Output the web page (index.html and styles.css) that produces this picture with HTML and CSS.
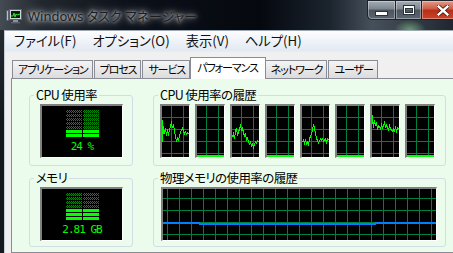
FILE: index.html
```html
<!DOCTYPE html>
<html lang="ja">
<head>
<meta charset="utf-8">
<title>Windows タスク マネージャー</title>
<link rel="stylesheet" href="styles.css">
</head>
<body>
<div class="window">
  <header class="titlebar">
    <svg class="app-icon" width="16" height="16" viewBox="0 0 16 16">
      <rect x="0.5" y="2.5" width="2" height="10" fill="#b8c0c8" stroke="#59616a"/>
      <rect x="3.5" y="1.5" width="12" height="10" fill="#d0d6dc" stroke="#59616a"/>
      <rect x="5" y="3" width="9" height="7" fill="#0b1f0e"/>
      <polyline points="5,8 7,8 8,5 9,9 10,6 11,7 14,6" fill="none" stroke="#30e030" stroke-width="1"/>
      <rect x="7" y="12" width="5" height="2" fill="#8a939c"/>
      <rect x="5" y="14" width="9" height="1.5" fill="#59616a"/>
    </svg>
    <span class="title">Windows タスク マネージャー</span>
    <div class="caption">
      <div class="cbtn min"><span class="glyph-min"></span></div>
      <div class="cbtn max"><span class="glyph-max"></span></div>
      <div class="cbtn close">
        <svg width="12" height="11" viewBox="0 0 12 11"><path d="M1.5 1.5 L10.5 9.5 M10.5 1.5 L1.5 9.5" stroke="#3a1008" stroke-width="4" stroke-linecap="square"/><path d="M1.5 1.5 L10.5 9.5 M10.5 1.5 L1.5 9.5" stroke="#fff" stroke-width="2.4" stroke-linecap="square"/></svg>
      </div>
    </div>
  </header>
  <div class="client">
    <nav class="menubar">
      <span class="menu">ファイル(F)</span>
      <span class="menu">オプション(O)</span>
      <span class="menu">表示(V)</span>
      <span class="menu">ヘルプ(H)</span>
    </nav>
    <div class="tabs">
      <div class="tabstrip">
        <span class="tab">アプリケーション</span>
        <span class="tab">プロセス</span>
        <span class="tab">サービス</span>
        <span class="tab selected">パフォーマンス</span>
        <span class="tab">ネットワーク</span>
        <span class="tab">ユーザー</span>
      </div>
      <div class="panel">
        <fieldset class="group">
          <legend>CPU 使用率</legend>
          <div class="display">
            <div class="meter">
              <div class="col"><div class="dim cpu-dim"></div><div class="lit cpu-lit"></div></div>
              <div class="col"><div class="dim cpu-dim"></div><div class="lit cpu-lit"></div></div>
            </div>
            <div class="readout">24 %</div>
          </div>
        </fieldset>
        <fieldset class="group">
          <legend>CPU 使用率の履歴</legend>
          <div class="graphs">
            <div class="graph">
              <svg width="27" height="51" viewBox="0 0 27 51"><polyline points="0.5,14 0.5,36 1.5,20 2.5,28 3.5,22 4.5,30 5.5,25 6.5,28 7.5,24 8.5,20 9.5,17 10.5,22 11.5,18 12.5,26 13.5,30 14.5,36 15.5,32 16.5,34 17.5,30 18.5,26 19.5,24 20.5,22 21.5,25 22.5,28 23.5,26 24.5,28 25.5,27 27,28"/></svg>
            </div>
            <div class="graph">
              <svg width="27" height="51" viewBox="0 0 27 51"><line class="base" x1="0" y1="50" x2="27" y2="50"/></svg>
            </div>
            <div class="graph">
              <svg width="27" height="51" viewBox="0 0 27 51"><polyline points="0.5,31 1.5,28 2.5,33 3.5,25 4.5,22 5.5,30 6.5,26 7.5,23 8.5,20 9.5,24 10.5,22 11.5,27 12.5,30 13.5,28 14.5,34 15.5,32 16.5,36 17.5,38 18.5,36 19.5,40 20.5,38 21.5,41 22.5,38 23.5,36 24.5,37 25.5,35 27,36"/></svg>
            </div>
            <div class="graph">
              <svg width="27" height="51" viewBox="0 0 27 51"><line class="base" x1="0" y1="50" x2="27" y2="50"/></svg>
            </div>
            <div class="graph">
              <svg width="27" height="51" viewBox="0 0 27 51"><polyline points="0.5,36 1.5,34 2.5,37 3.5,33 4.5,39 5.5,35 6.5,40 7.5,33 8.5,30 9.5,28 10.5,24 11.5,18 12.5,22 13.5,28 14.5,32 15.5,35 16.5,37 17.5,35 18.5,33 19.5,34 20.5,33 21.5,35 22.5,34 23.5,33 24.5,36 25.5,33 27,34"/></svg>
            </div>
            <div class="graph">
              <svg width="27" height="51" viewBox="0 0 27 51"><line class="base" x1="0" y1="50" x2="27" y2="50"/></svg>
            </div>
            <div class="graph">
              <svg width="27" height="51" viewBox="0 0 27 51"><polyline points="0.5,18 0.5,9 1.5,22 2.5,14 3.5,20 4.5,16 5.5,24 6.5,20 7.5,21 8.5,23 9.5,19 10.5,22 11.5,20 12.5,17 13.5,21 14.5,19 15.5,22 16.5,24 17.5,20 18.5,23 19.5,24 20.5,25 21.5,23 22.5,26 23.5,20 24.5,25 25.5,22 27,23"/></svg>
            </div>
            <div class="graph">
              <svg width="27" height="51" viewBox="0 0 27 51"><line class="base" x1="0" y1="50" x2="27" y2="50"/></svg>
            </div>
          </div>
        </fieldset>
        <fieldset class="group">
          <legend>メモリ</legend>
          <div class="display">
            <div class="meter">
              <div class="col"><div class="dim mem-dim"></div><div class="lit mem-lit"></div></div>
              <div class="col"><div class="dim mem-dim"></div><div class="lit mem-lit"></div></div>
            </div>
            <div class="readout">2.81 GB</div>
          </div>
        </fieldset>
        <fieldset class="group">
          <legend>物理メモリの使用率の履歴</legend>
          <div class="graph wide">
            <svg width="273" height="51" viewBox="0 0 273 51"><polyline class="mem" points="0,34 36,34 37,35 212,35 213,34 273,34"/></svg>
          </div>
        </fieldset>
      </div>
    </div>
  </div>
</div>
</body>
</html>
```

FILE: styles.css
```css
html, body {
  margin: 0;
  padding: 0;
  width: 453px;
  height: 253px;
  overflow: hidden;
}

body {
  background: #0b0f18;
  font-family: "Noto Sans CJK JP", "Noto Sans", sans-serif;
}

.window {
  width: 464px;
  height: 253px;
  display: flex;
  flex-direction: column;
  background: linear-gradient(to bottom, #2b3038 0, #14181f 120px);
}

/* ---------- title bar ---------- */
.titlebar {
  height: 30px;
  flex: none;
  display: flex;
  align-items: center;
  padding-left: 6px;
  background:
    radial-gradient(ellipse 16px 10px at 410px 30px, rgba(150, 230, 150, 0.55), transparent),
    linear-gradient(to right, #454b53 0, #23282f 40px, #0c1018 130px, #05080f 260px, #1c242e 330px, #46505b 372px, #2b333d 430px, #1a2029 464px);
}

.app-icon {
  flex: none;
  margin-right: 6px;
  margin-top: 2px;
}

.title {
  font-family: "Noto Sans", "Noto Sans CJK JP", sans-serif;
  font-size: 13px;
  line-height: 18px;
  color: #1c1c1c;
  font-feature-settings: "palt";
  text-shadow: 0 0 6px rgba(225, 230, 236, 0.9), 0 0 12px rgba(200, 208, 216, 0.8), 0 0 3px rgba(230, 235, 240, 0.9);
  margin-top: 1px;
}

.caption {
  margin-left: auto;
  align-self: flex-start;
  display: flex;
}

.cbtn {
  height: 20px;
  box-sizing: border-box;
  border: 1px solid #1e242b;
  box-shadow: inset 0 0 0 1px rgba(255, 255, 255, 0.35);
  display: flex;
  align-items: center;
  justify-content: center;
  background: linear-gradient(to bottom, #a4abb3 0, #7c858e 45%, #4c555f 50%, #5c6670 100%);
}

.cbtn.min {
  width: 28px;
  border-bottom-left-radius: 5px;
  border-right: none;
}

.cbtn.max {
  width: 26px;
  border-right: none;
}

.cbtn.close {
  width: 43px;
  background: linear-gradient(to bottom, #e39a8a 0, #cf5a42 45%, #b52f17 50%, #c9442a 100%);
}

.glyph-min {
  width: 11px;
  height: 3px;
  background: #fff;
  box-shadow: 0 0 0 1px #2a3139;
  margin-top: 6px;
}

.glyph-max {
  width: 8px;
  height: 5px;
  border: 1px solid #fff;
  border-top-width: 2px;
  box-shadow: 0 0 0 1px #2a3139, inset 0 0 0 1px #2a3139;
}

/* ---------- client ---------- */
.client {
  flex: 1;
  margin-left: 4px;
  border-left: 1px solid #c5ccd4;
  border-top: 1px solid #9ea8b2;
  background: #f0f0f0;
  display: flex;
  flex-direction: column;
  min-height: 0;
}

.menubar {
  height: 20px;
  flex: none;
  display: flex;
  padding-left: 1px;
  background: linear-gradient(to bottom, #fdfdfe 0, #f0f4f9 45%, #e2e9f2 100%);
  border-bottom: 1px solid #e8edf3;
}

.menu {
  padding: 0 8px;
  font-size: 13.3px;
  line-height: 20px;
  color: #111;
  font-feature-settings: "palt";
}

.tabs {
  margin-top: 5px;
  display: flex;
  flex-direction: column;
  flex: 1;
  min-height: 0;
}

.tabstrip {
  height: 21px;
  flex: none;
  display: flex;
  align-items: flex-end;
  gap: 1px;
  padding-left: 7px;
}

.tab {
  height: 18px;
  box-sizing: border-box;
  padding: 0 4px 0 5px;
  border: 1px solid #898c95;
  border-bottom: none;
  background: linear-gradient(to bottom, #f4f4f4 0, #e8e8e8 50%, #dcdcdc 100%);
  font-size: 11px;
  line-height: 17px;
  letter-spacing: -1.1px;
  color: #000;
  font-feature-settings: "palt";
}

.tab.selected {
  height: 22px;
  margin: 0 -2px -1px -1px;
  padding: 0 7px 0 6px;
  background: #fff;
  position: relative;
  z-index: 1;
  line-height: 19px;
}

.panel {
  flex: 1;
  margin-left: 6px;
  border: 1px solid #898c95;
  background: #ecfcec;
  padding: 9px 0 0 17px;
  display: grid;
  grid-template-columns: 104px 293px;
  grid-template-rows: 78px 76px;
  column-gap: 20px;
  row-gap: 5px;
  align-content: start;
}

.group {
  margin: 0;
  padding: 2px 0 0 4px;
  border: 1px solid #d3dde4;
  border-radius: 3px;
  min-width: 0;
  box-sizing: border-box;
}

.group legend {
  padding: 0 2px;
  margin: 0;
  font-size: 12.5px;
  line-height: 14px;
  letter-spacing: -0.6px;
  color: #000;
  font-feature-settings: "palt";
}

.display {
  width: 83px;
  height: 54px;
  box-sizing: border-box;
  margin-left: 6px;
  border-style: solid;
  border-width: 2px 1px 1px 2px;
  border-color: #808080 #fff #fff #808080;
  background: #000;
  display: flex;
  flex-direction: column;
  align-items: center;
  padding-top: 4px;
}

.meter {
  display: flex;
  gap: 1px;
}

.col {
  width: 16px;
  display: flex;
  flex-direction: column;
}

.dim {
  background:
    repeating-linear-gradient(to bottom, transparent 0 3px, #000 3px 4px),
    repeating-conic-gradient(#009000 0 25%, #000 0 50%) 0 0 / 2px 2px;
}

.lit {
  background: repeating-linear-gradient(to bottom, #00ff00 0 3px, #000 3px 4px);
}

.cpu-dim { height: 20px; }
.cpu-lit { height: 8px; }
.mem-dim { height: 16px; }
.mem-lit { height: 12px; }

.readout {
  margin-top: 3px;
  font-family: "DejaVu Sans Mono", monospace;
  font-size: 11px;
  line-height: 12px;
  letter-spacing: -1px;
  color: #00ff00;
}

.graphs {
  display: flex;
  gap: 5px;
  margin-left: 2px;
}

.graph {
  width: 30px;
  height: 54px;
  box-sizing: border-box;
  border-style: solid;
  border-width: 2px 1px 1px 2px;
  border-color: #808080 #fff #fff #808080;
  background-color: #000;
  background-image:
    linear-gradient(to right, #008040 1px, transparent 1px),
    linear-gradient(to bottom, #008040 1px, transparent 1px);
  background-size: 12px 12px;
  background-position: 9px 11px;
}

.graph svg {
  display: block;
  shape-rendering: crispEdges;
}

.graph polyline {
  fill: none;
  stroke: #00ff00;
  stroke-width: 1;
}

.graph .base {
  stroke: #00ff00;
  stroke-width: 2;
}

.graph.wide {
  width: 276px;
  margin-left: 3px;
  background-position: 4px 9px;
}

.graph polyline.mem {
  stroke: #0080ff;
  stroke-width: 2;
}
```
